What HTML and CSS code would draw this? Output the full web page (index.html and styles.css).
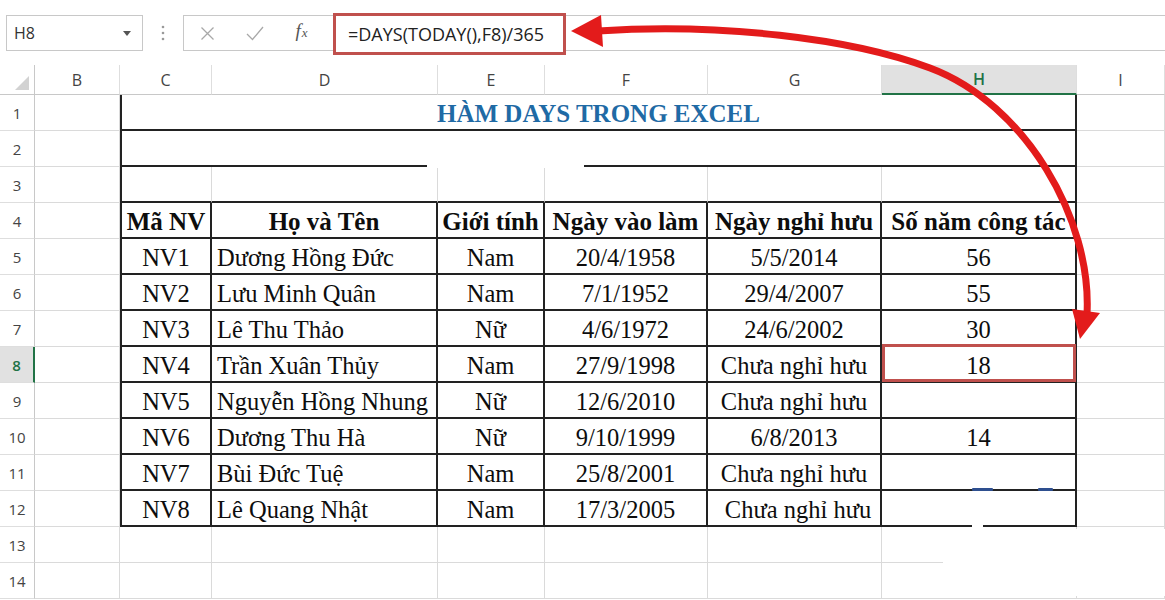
FILE: index.html
```html
<!DOCTYPE html>
<html lang="vi">
<head>
<meta charset="utf-8">
<title>Hàm DAYS trong Excel</title>
<link rel="stylesheet" href="styles.css">
</head>
<body>
<div class="app">
  <div class="fbar">
    <div class="namebox">
      <span>H8</span>
      <svg class="caret" width="8" height="5" viewBox="0 0 8 5"><polygon points="0,0 8,0 4,5" fill="#555"/></svg>
    </div>
    <div class="dots">
      <svg width="4" height="16" viewBox="0 0 4 16"><circle cx="2" cy="2" r="1.3" fill="#9a9a9a"/><circle cx="2" cy="8" r="1.3" fill="#9a9a9a"/><circle cx="2" cy="14" r="1.3" fill="#9a9a9a"/></svg>
    </div>
    <div class="fxarea">
      <div class="ic"><svg width="15" height="15" viewBox="0 0 15 15"><path d="M1.5 1.5L13.5 13.5M13.5 1.5L1.5 13.5" stroke="#a8a8a8" stroke-width="1.3" fill="none"/></svg></div>
      <div class="ic"><svg width="18" height="15" viewBox="0 0 18 15"><path d="M1 8L6.5 13.5L17 1" stroke="#a8a8a8" stroke-width="1.3" fill="none"/></svg></div>
      <div class="ic fx"><span class="f">f</span><span class="x">x</span></div>
      <div class="formula">=DAYS(TODAY(),F8)/365</div>
    </div>
  </div>

  <div class="sheet">
    <div class="row hrow">
      <div class="corner"><svg width="14" height="14" viewBox="0 0 14 14"><polygon points="14,0 14,14 0,14" fill="#d2d2d2"/></svg></div>
      <div class="ch">B</div><div class="ch">C</div><div class="ch">D</div><div class="ch">E</div><div class="ch">F</div><div class="ch">G</div><div class="ch sel">H</div><div class="ch">I</div>
    </div>

    <div class="row">
      <div class="rh">1</div><div class="c"></div>
      <div class="c t tl title">HÀM DAYS TRONG EXCEL</div>
      <div class="c"></div>
    </div>
    <div class="row">
      <div class="rh">2</div><div class="c"></div>
      <div class="c t tl merged"></div>
      <div class="c"></div>
    </div>
    <div class="row">
      <div class="rh">3</div><div class="c"></div>
      <div class="c t3 tl"></div><div class="c t3"></div><div class="c t3"></div><div class="c t3"></div><div class="c t3"></div><div class="c t"></div>
      <div class="c"></div>
    </div>
    <div class="row">
      <div class="rh">4</div><div class="c"></div>
      <div class="c t tl b">Mã NV</div><div class="c t b">Họ và Tên</div><div class="c t b">Giới tính</div><div class="c t b">Ngày vào làm</div><div class="c t b">Ngày nghỉ hưu</div><div class="c t b">Số năm công tác</div>
      <div class="c"></div>
    </div>
    <div class="row">
      <div class="rh">5</div><div class="c"></div>
      <div class="c t tl">NV1</div><div class="c t left">Dương Hồng Đức</div><div class="c t">Nam</div><div class="c t">20/4/1958</div><div class="c t">5/5/2014</div><div class="c t">56</div>
      <div class="c"></div>
    </div>
    <div class="row">
      <div class="rh">6</div><div class="c"></div>
      <div class="c t tl">NV2</div><div class="c t left">Lưu Minh Quân</div><div class="c t">Nam</div><div class="c t">7/1/1952</div><div class="c t">29/4/2007</div><div class="c t">55</div>
      <div class="c"></div>
    </div>
    <div class="row">
      <div class="rh">7</div><div class="c"></div>
      <div class="c t tl">NV3</div><div class="c t left">Lê Thu Thảo</div><div class="c t">Nữ</div><div class="c t">4/6/1972</div><div class="c t">24/6/2002</div><div class="c t">30</div>
      <div class="c"></div>
    </div>
    <div class="row">
      <div class="rh rsel">8</div><div class="c"></div>
      <div class="c t tl">NV4</div><div class="c t left">Trần Xuân Thủy</div><div class="c t">Nam</div><div class="c t">27/9/1998</div><div class="c t">Chưa nghỉ hưu</div><div class="c t active">18<span class="selbox"></span></div>
      <div class="c"></div>
    </div>
    <div class="row">
      <div class="rh">9</div><div class="c"></div>
      <div class="c t tl">NV5</div><div class="c t left">Nguyễn Hồng Nhung</div><div class="c t">Nữ</div><div class="c t">12/6/2010</div><div class="c t">Chưa nghỉ hưu</div><div class="c t"></div>
      <div class="c"></div>
    </div>
    <div class="row">
      <div class="rh">10</div><div class="c"></div>
      <div class="c t tl">NV6</div><div class="c t left">Dương Thu Hà</div><div class="c t">Nữ</div><div class="c t">9/10/1999</div><div class="c t">6/8/2013</div><div class="c t">14</div>
      <div class="c"></div>
    </div>
    <div class="row">
      <div class="rh">11</div><div class="c"></div>
      <div class="c t tl">NV7</div><div class="c t left">Bùi Đức Tuệ</div><div class="c t">Nam</div><div class="c t">25/8/2001</div><div class="c t">Chưa nghỉ hưu</div><div class="c t"></div>
      <div class="c"></div>
    </div>
    <div class="row">
      <div class="rh">12</div><div class="c"></div>
      <div class="c t tl">NV8</div><div class="c t left">Lê Quang Nhật</div><div class="c t">Nam</div><div class="c t">17/3/2005</div><div class="c t shift">Chưa nghỉ hưu</div><div class="c t"></div>
      <div class="c"></div>
    </div>
    <div class="row">
      <div class="rh">13</div><div class="c"></div><div class="c"></div><div class="c"></div><div class="c"></div><div class="c"></div><div class="c"></div><div class="c"></div><div class="c"></div>
    </div>
    <div class="row">
      <div class="rh">14</div><div class="c"></div><div class="c"></div><div class="c"></div><div class="c"></div><div class="c"></div><div class="c"></div><div class="c"></div><div class="c"></div>
    </div>
  </div>

  <div class="smudge s1"></div>
  <div class="smudge s2"></div>
  <div class="smudge s3"></div>
  <div class="bluedash d1"></div>
  <div class="bluedash d2"></div>

  <svg class="arrow" width="1165" height="600" viewBox="0 0 1165 600">
    <path d="M598 31 C720 23 850 38 930 68 C1026 104 1092 220 1087 314" fill="none" stroke="#e31b1b" stroke-width="7" stroke-linecap="round"/>
    <polygon points="571,31 601,15 603,47" fill="#e31b1b"/>
    <polygon points="1072,309 1100,313 1080,339" fill="#e31b1b"/>
  </svg>
</div>
</body>
</html>
```

FILE: styles.css
```css
html, body {
  margin: 0;
  padding: 0;
  background: #fff;
}
body {
  width: 1165px;
  height: 600px;
  overflow: hidden;
  font-family: "Open Sans", "Noto Sans", sans-serif;
}
.app {
  position: relative;
  width: 1165px;
  height: 600px;
}

/* formula bar */
.fbar {
  height: 65px;
  box-sizing: border-box;
  padding-top: 15px;
  display: flex;
  align-items: flex-start;
}
.namebox {
  margin-left: 6px;
  width: 137px;
  height: 36px;
  box-sizing: border-box;
  border: 1px solid #c8c8c8;
  display: flex;
  align-items: center;
  justify-content: space-between;
  padding: 0 11px 0 7px;
  font-size: 16px;
  color: #333;
}
.dots {
  width: 40px;
  height: 36px;
  display: flex;
  align-items: center;
  justify-content: center;
}
.fxarea {
  position: relative;
  flex: 1;
  height: 36px;
  box-sizing: border-box;
  border: 1px solid #c8c8c8;
  border-right: none;
  display: flex;
  align-items: center;
}
.ic {
  width: 47px;
  height: 34px;
  display: flex;
  align-items: center;
  justify-content: center;
}
.fx {
  font-family: "Liberation Serif", serif;
  font-style: italic;
  color: #555;
  align-items: baseline;
  padding-top: 4px;
  box-sizing: border-box;
}
.fx .f { font-size: 19px; }
.fx .x { font-size: 13px; margin-left: 1px; }
.formula {
  position: absolute;
  left: 149px;
  top: -3px;
  width: 233px;
  height: 42px;
  box-sizing: border-box;
  border: 3px solid #c0504d;
  background: #fff;
  display: flex;
  align-items: center;
  padding-left: 12px;
  font-size: 18px;
  color: #222;
  white-space: nowrap;
}

/* sheet grid */
.row {
  display: grid;
  grid-template-columns: 35px 85px 92px 226px 107px 163px 174px 195px 88px;
  height: 36px;
}
.hrow {
  height: 30px;
}
.corner {
  box-sizing: border-box;
  border-right: 1px solid #c8c8c8;
  border-bottom: 1px solid #c8c8c8;
  display: flex;
  align-items: flex-end;
  justify-content: flex-end;
  padding: 0 5px 4px 0;
}
.ch {
  box-sizing: border-box;
  border-right: 1px solid #dedede;
  border-bottom: 1px solid #c8c8c8;
  display: flex;
  align-items: center;
  justify-content: center;
  font-size: 16px;
  color: #444;
}
.ch.sel {
  background: #e1e1e1;
  border-bottom: 2px solid #217346;
  color: #217346;
  font-weight: 600;
}
.rh {
  box-sizing: border-box;
  border-right: 1px solid #c8c8c8;
  border-bottom: 1px solid #dedede;
  display: flex;
  align-items: center;
  justify-content: center;
  font-size: 15px;
  color: #444;
}
.rh.rsel {
  background: #e1e1e1;
  border-right: 2px solid #217346;
  color: #217346;
  font-weight: 600;
}
.c {
  position: relative;
  box-sizing: border-box;
  border-right: 1px solid #dadada;
  border-bottom: 1px solid #dadada;
  display: flex;
  align-items: center;
  justify-content: center;
  padding-top: 4px;
  font-family: "Liberation Serif", "Times New Roman", serif;
  font-size: 24.5px;
  color: #0d0d0d;
  white-space: nowrap;
}
.t {
  border-right: 2px solid #222;
  border-bottom: 2px solid #222;
}
.t3 {
  border-bottom: 2px solid #222;
}
.tl {
  border-left: 2px solid #222;
}
.title,
.merged {
  grid-column: span 6;
}
.title {
  color: #1f6aa5;
  font-weight: bold;
  font-size: 25px;
}
.b {
  font-weight: bold;
  font-size: 25px;
}
.left {
  justify-content: flex-start;
  padding-left: 5px;
}
.shift {
  padding-left: 8px;
}
.selbox {
  position: absolute;
  left: 0;
  right: -1px;
  top: -3px;
  bottom: -1px;
  border: 3px solid #c0504d;
}

/* scan artifacts of the original picture */
.smudge {
  position: absolute;
  background: #fff;
}
.s1 { left: 943px; top: 529px; width: 222px; height: 67px; }
.s2 { left: 427px; top: 164px; width: 157px; height: 4px; }
.s3 { left: 972px; top: 523px; width: 11px; height: 5px; }
.bluedash {
  position: absolute;
  height: 3px;
  background: #2e4f8f;
  border-radius: 1px;
}
.d1 { left: 972px; top: 488px; width: 21px; }
.d2 { left: 1038px; top: 488px; width: 15px; }

.arrow {
  position: absolute;
  left: 0;
  top: 0;
  pointer-events: none;
}
```
